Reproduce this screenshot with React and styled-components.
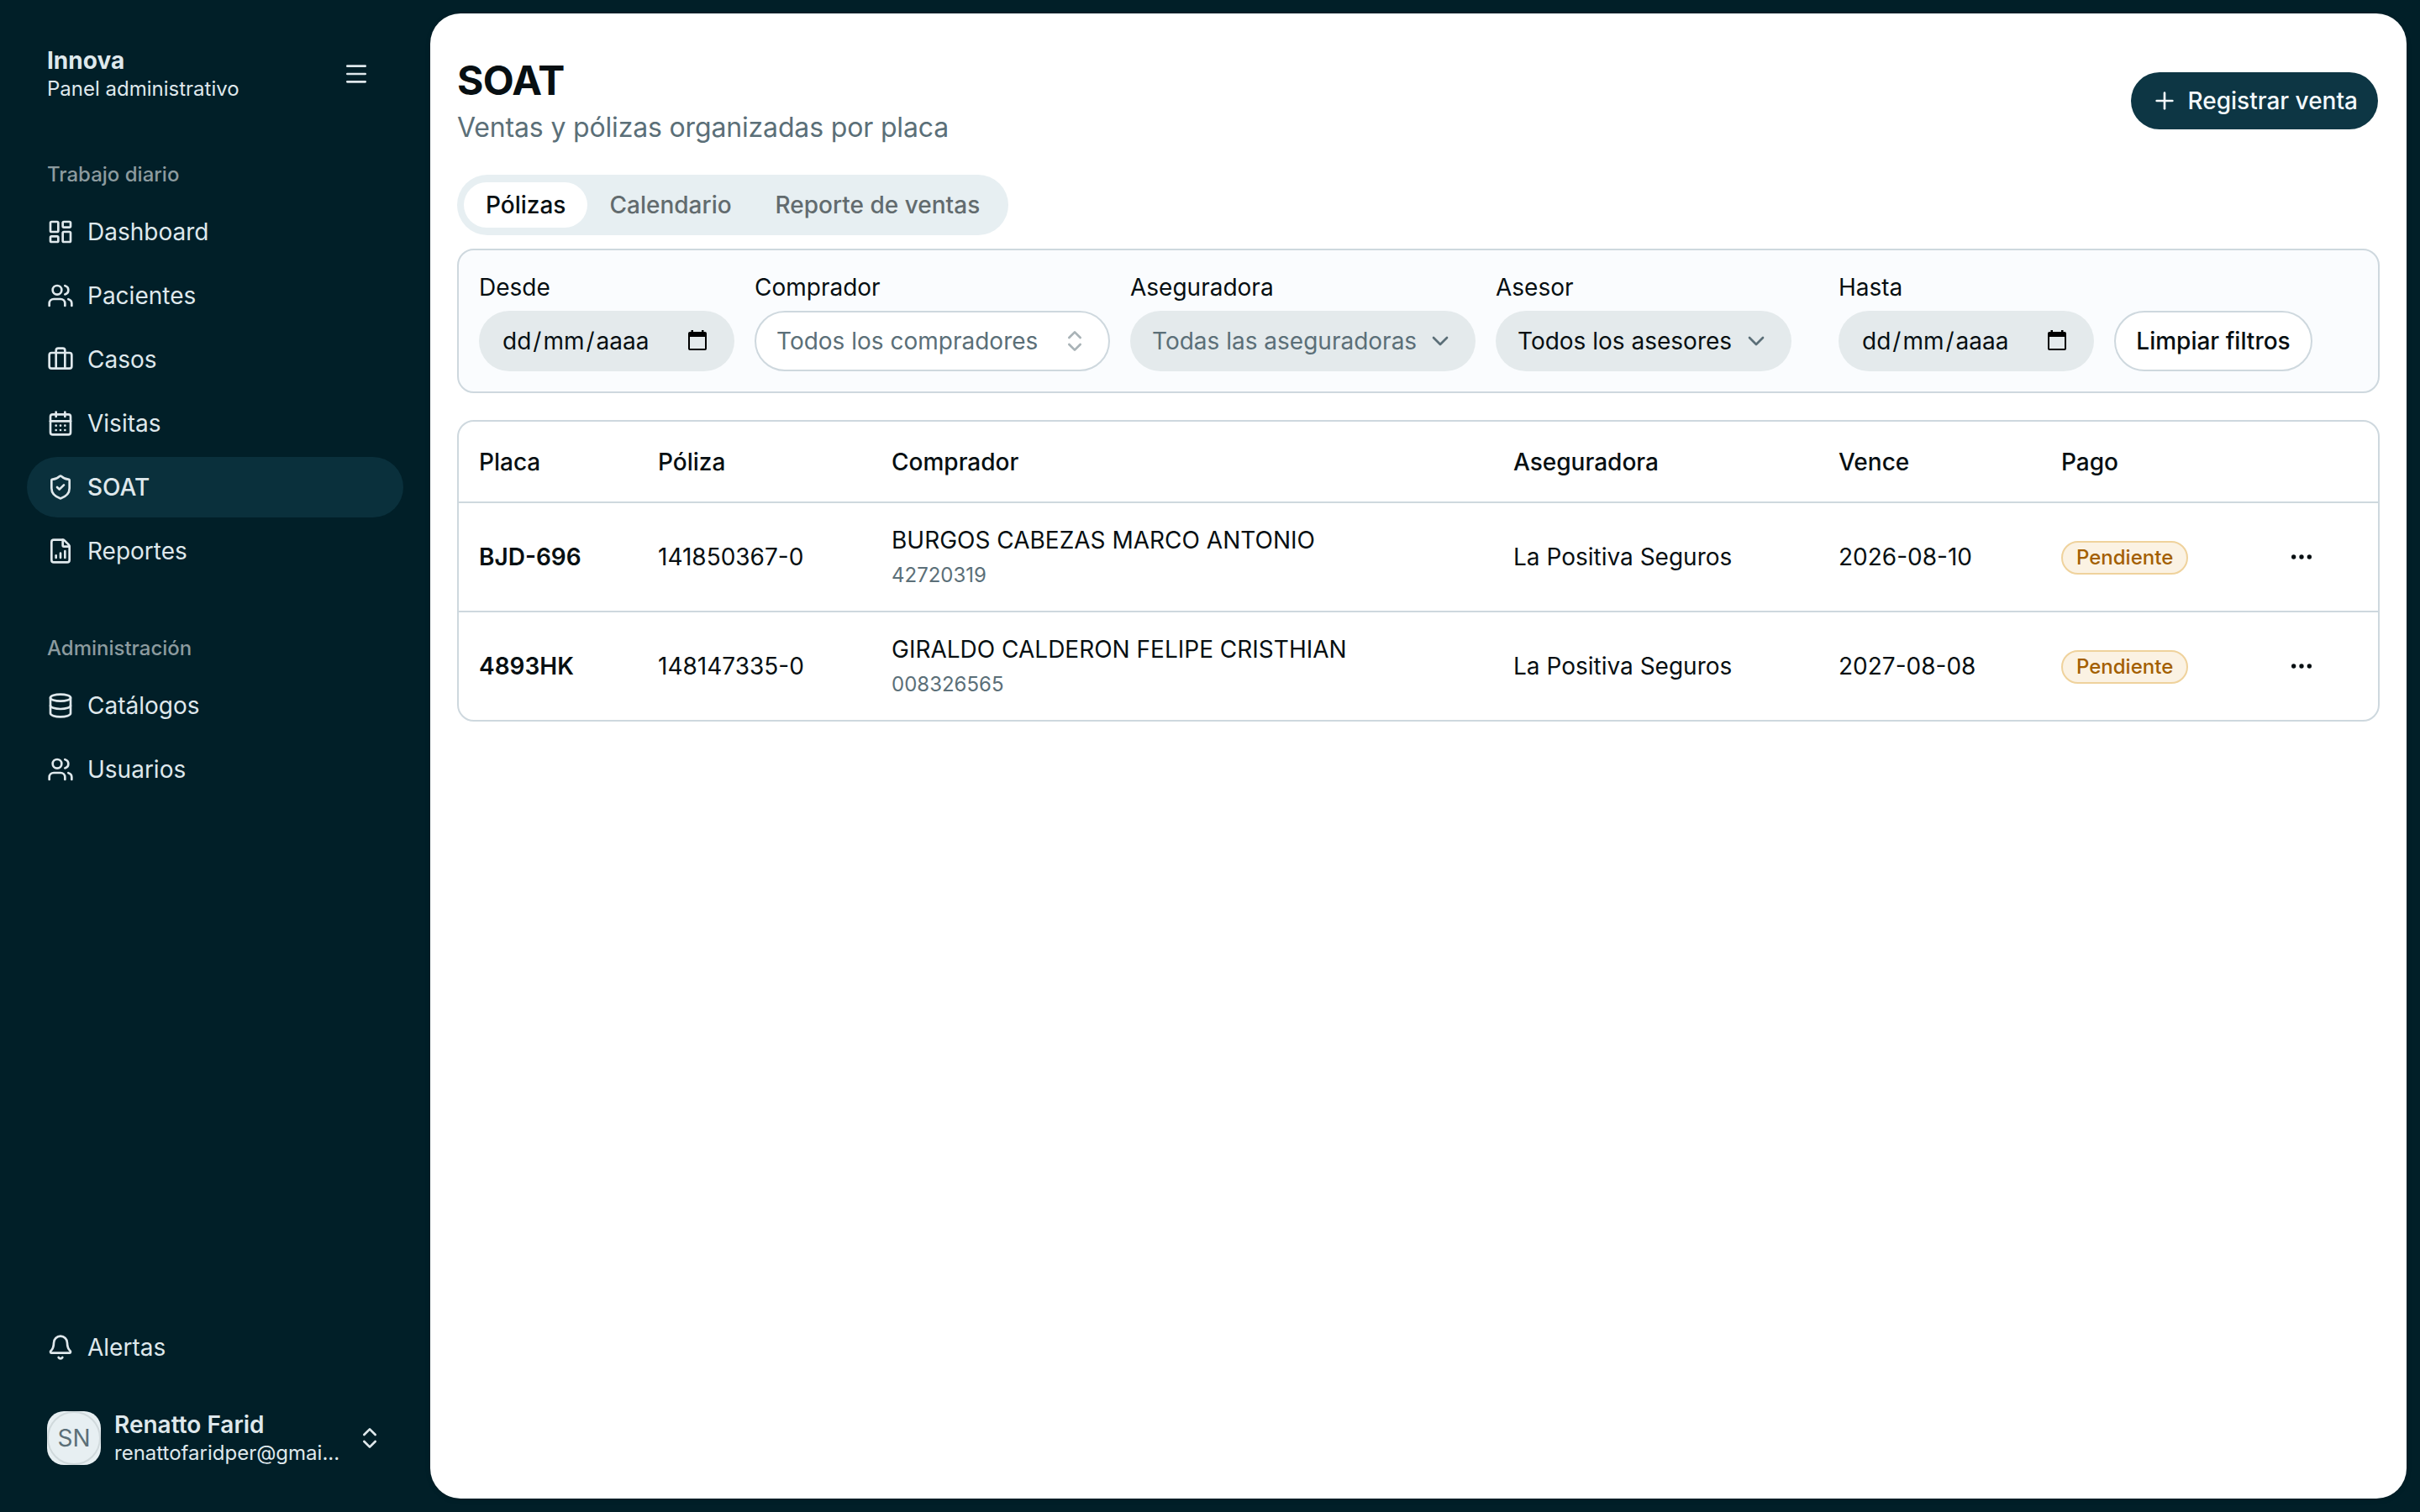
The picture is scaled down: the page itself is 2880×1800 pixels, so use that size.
import React from "react";
import styled, { createGlobalStyle } from "styled-components";
import {
  Menu, LayoutDashboard, Users, Briefcase, CalendarDays, ShieldCheck,
  FileChartColumnIncreasing, Database, Bell, ChevronsUpDown, ChevronDown, Plus, Ellipsis,
} from "lucide-react";

const GlobalStyle = createGlobalStyle`
  *, *::before, *::after { box-sizing: border-box; }
  body {
    margin: 0;
    background: #011f28;
    font-family: Inter, "Liberation Sans", sans-serif;
    font-size: 28px;
    line-height: 40px;
    color: #070f12;
    -webkit-font-smoothing: antialiased;
  }
  button { font: inherit; color: inherit; margin: 0; cursor: pointer; }
  svg { display: block; flex-shrink: 0; }
`;

const Shell = styled.div`
  display: flex;
  width: 100%;
  height: 100vh;
  padding: 16px 16px 16px 0;
  background: #011f28;
`;

const Sidebar = styled.aside`
  display: flex;
  flex-direction: column;
  width: 512px;
  flex-shrink: 0;
  padding: 16px 32px 24px;
  color: #dfe8ec;
`;

const Brand = styled.div`
  display: flex;
  align-items: center;
  justify-content: space-between;
  height: 112px;
  padding: 0 24px;
`;

const BrandText = styled.div`
  display: flex;
  flex-direction: column;
`;

const Strong = styled.span`
  font-size: 28px;
  line-height: 35px;
  font-weight: ${(p) => p.$weight || 600};
`;

const Small = styled.span`
  font-size: 24px;
  line-height: 32px;
`;

const IconButton = styled.button`
  display: grid;
  place-items: center;
  width: 64px;
  height: 64px;
  padding: 0;
  border: 0;
  background: none;
`;

const NavGroup = styled.nav`
  padding-top: ${(p) => p.$top}px;
`;

const NavItems = styled.div`
  display: flex;
  flex-direction: column;
  gap: 4px;
`;

const GroupLabel = styled.div`
  display: flex;
  align-items: center;
  height: 64px;
  padding: 0 24px;
  font-size: 24px;
  font-weight: 500;
  color: #8c9b9f;
`;

const NavItem = styled.a`
  display: flex;
  align-items: center;
  gap: 16px;
  height: 72px;
  padding: 0 24px;
  border-radius: 36px;
  background: ${(p) => (p.$active ? "#0a303c" : "transparent")};
  font-weight: ${(p) => (p.$active ? 500 : 400)};
`;

const Footer = styled.div`
  display: flex;
  flex-direction: column;
  gap: 24px;
  margin-top: auto;
`;

const Account = styled.div`
  display: flex;
  align-items: center;
  gap: 16px;
  height: 96px;
  padding: 0 24px;
`;

const Avatar = styled.div`
  width: 64px;
  height: 64px;
  border-radius: 20px;
  overflow: hidden;
  background: #e7eff2;
`;

const AvatarRing = styled.div`
  display: grid;
  place-items: center;
  width: 64px;
  height: 64px;
  border: 2px solid #d0d9dc;
  border-radius: 50%;
  color: #5b6f78;
`;

const AccountText = styled.div`
  display: flex;
  flex-direction: column;
  width: 272px;
`;

const Main = styled.main`
  flex: 1;
  min-width: 0;
  display: flex;
  flex-direction: column;
  padding: 48px 32px 32px;
  border-radius: 36px;
  background: #ffffff;
  box-shadow: 0 2px 6px rgba(0, 0, 0, 0.1);
`;

const PageHeader = styled.header`
  display: flex;
  align-items: center;
  justify-content: space-between;
  height: 112px;
`;

const Title = styled.h1`
  margin: 0;
  font-size: 48px;
  line-height: 64px;
  font-weight: 700;
  letter-spacing: -0.6px;
`;

const Subtitle = styled.p`
  margin: 0;
  font-size: 32px;
  line-height: 48px;
  letter-spacing: -0.16px;
  color: #5b6f78;
`;

const PrimaryButton = styled.button`
  display: flex;
  align-items: center;
  gap: 11px;
  height: 72px;
  padding: 0 24px;
  border: 2px solid transparent;
  border-radius: 36px;
  background: #0d3644;
  background-clip: padding-box;
  color: #f3f9fc;
  font-weight: 500;
`;

const Tabs = styled.div`
  display: flex;
  align-items: center;
  align-self: flex-start;
  height: 72px;
  margin-top: 32px;
  padding: 0 8px;
  border-radius: 36px;
  background: #e7eff2;
`;

const Tab = styled.button`
  height: 54px;
  padding: 0 24px;
  border: 2px solid transparent;
  border-radius: 27px;
  background: ${(p) => (p.$active ? "#ffffff" : "transparent")};
  color: ${(p) => (p.$active ? "#070f12" : "#626b6e")};
  font-weight: 500;
  line-height: 40px;
`;

const Filters = styled.section`
  display: flex;
  align-items: flex-end;
  gap: 24px;
  height: 172px;
  margin-top: 16px;
  padding: 24px;
  border: 2px solid #ced8de;
  border-radius: 20px;
  background: #fafcfe;
`;

const Field = styled.div`
  display: flex;
  flex-direction: column;
  align-items: flex-start;
  gap: 8px;
  width: ${(p) => p.$width}px;
`;

const Control = styled.div`
  display: flex;
  align-items: center;
  justify-content: space-between;
  width: ${(p) => p.$width}px;
  height: 72px;
  padding: 0 ${(p) => p.$end || 24}px 0 24px;
  border: 2px solid ${(p) => (p.$outlined ? "#ced8de" : "transparent")};
  border-radius: 36px;
  background: ${(p) => (p.$outlined ? "#ffffff" : "#e4eaec")};
  color: ${(p) => (p.$muted ? "#5b6f78" : "#070f12")};
  white-space: nowrap;

  svg { color: ${(p) => (p.$outlined ? "#a9b3b7" : "#5b6f78")}; }
`;

const DateText = styled.span`
  display: flex;
`;

const DatePart = styled.span`
  padding: 0 2px;
`;

const ClearButton = styled.button`
  width: 236px;
  height: 72px;
  padding: 0;
  border: 2px solid #ced8de;
  border-radius: 36px;
  background: #ffffff;
  font-weight: 500;
  white-space: nowrap;
`;

const TableCard = styled.section`
  margin-top: 32px;
  border: 2px solid #ced8de;
  border-radius: 20px;
  overflow: hidden;
`;

const Row = styled.div`
  display: grid;
  grid-template-columns: 213px 278px 740px 387px 265px 254px 1fr;
  align-items: center;
  height: ${(p) => p.$height}px;
  padding-left: 24px;
  border-bottom: ${(p) => (p.$last ? 0 : 2)}px solid #ced8de;
  font-weight: ${(p) => (p.$head ? 500 : 400)};
`;

const Plate = styled.span`
  font-weight: 600;
`;

const Buyer = styled.div`
  display: flex;
  flex-direction: column;
`;

const BuyerId = styled.span`
  margin-top: 4px;
  font-size: 24px;
  line-height: 36px;
  color: #5b6f78;
`;

const Badge = styled.span`
  justify-self: start;
  display: flex;
  align-items: center;
  height: 40px;
  margin-top: 2px;
  padding: 0 16px;
  border: 2px solid #efd29c;
  border-radius: 20px;
  background: #fbf2e3;
  color: #a35f00;
  font-size: 24px;
  font-weight: 500;
`;

const CalendarGlyph = () => (
  <svg width="24" height="26" viewBox="0 0 24 26">
    <path
      fill="#000"
      fillRule="evenodd"
      d="M4.500 0h2.500v2h10V0h2.500v2h1.500a2 2 0 0 1 2 2v18a2 2 0 0 1-2 2H3a2 2 0 0 1-2-2V4a2 2 0 0 1 2-2h1.500zM3 8v14h18V8z"
    />
  </svg>
);

const daily = [
  ["Dashboard", LayoutDashboard],
  ["Pacientes", Users],
  ["Casos", Briefcase],
  ["Visitas", CalendarDays],
  ["SOAT", ShieldCheck],
  ["Reportes", FileChartColumnIncreasing],
];

const admin = [
  ["Catálogos", Database],
  ["Usuarios", Users],
];

const policies = [
  { plate: "BJD-696", policy: "141850367-0", buyer: "BURGOS CABEZAS MARCO ANTONIO", id: "42720319", due: "2026-08-10" },
  { plate: "4893HK", policy: "148147335-0", buyer: "GIRALDO CALDERON FELIPE CRISTHIAN", id: "008326565", due: "2027-08-08" },
];

const NavList = ({ label, items, top, active }) => (
  <NavGroup $top={top}>
    <GroupLabel>{label}</GroupLabel>
    <NavItems>
      {items.map(([name, Icon]) => (
        <NavItem key={name} $active={name === active}>
          <Icon size={32} />
          {name}
        </NavItem>
      ))}
    </NavItems>
  </NavGroup>
);

const DateField = ({ label }) => (
  <Field $width={304}>
    <span>{label}</span>
    <Control $width={304} $end={30}>
      <DateText>
        <DatePart>dd</DatePart>/<DatePart>mm</DatePart>/<DatePart>aaaa</DatePart>
      </DateText>
      <CalendarGlyph />
    </Control>
  </Field>
);

export default function App() {
  return (
    <>
      <GlobalStyle />
      <Shell>
        <Sidebar>
          <Brand>
            <BrandText>
              <Strong $weight={700}>Innova</Strong>
              <Small>Panel administrativo</Small>
            </BrandText>
            <IconButton><Menu size={32} /></IconButton>
          </Brand>
          <NavList label="Trabajo diario" items={daily} top={32} active="SOAT" />
          <NavList label="Administración" items={admin} top={48} />
          <Footer>
            <NavItem><Bell size={32} />Alertas</NavItem>
            <Account>
              <Avatar><AvatarRing>SN</AvatarRing></Avatar>
              <AccountText>
                <Strong>Renatto Farid</Strong>
                <Small>renattofaridper@gmai...</Small>
              </AccountText>
              <ChevronsUpDown size={32} />
            </Account>
          </Footer>
        </Sidebar>
        <Main>
          <PageHeader>
            <div>
              <Title>SOAT</Title>
              <Subtitle>Ventas y pólizas organizadas por placa</Subtitle>
            </div>
            <PrimaryButton><Plus size={32} />Registrar venta</PrimaryButton>
          </PageHeader>
          <Tabs>
            <Tab $active>Pólizas</Tab>
            <Tab>Calendario</Tab>
            <Tab>Reporte de ventas</Tab>
          </Tabs>
          <Filters>
            <DateField label="Desde" />
            <Field $width={423}>
              <span>Comprador</span>
              <Control $width={423} $outlined $muted>
                Todos los compradores
                <ChevronsUpDown size={32} />
              </Control>
            </Field>
            <Field $width={411}>
              <span>Aseguradora</span>
              <Control $width={411} $muted>
                Todas las aseguradoras
                <ChevronDown size={32} />
              </Control>
            </Field>
            <Field $width={384}>
              <span>Asesor</span>
              <Control $width={352}>
                Todos los asesores
                <ChevronDown size={32} />
              </Control>
            </Field>
            <DateField label="Hasta" />
            <ClearButton>Limpiar filtros</ClearButton>
          </Filters>
          <TableCard>
            <Row $head $height={97}>
              <span>Placa</span>
              <span>Póliza</span>
              <span>Comprador</span>
              <span>Aseguradora</span>
              <span>Vence</span>
              <span>Pago</span>
            </Row>
            {policies.map((p, i) => (
              <Row key={p.plate} $height={i === 0 ? 130 : 128} $last={i === 1}>
                <Plate>{p.plate}</Plate>
                <span>{p.policy}</span>
                <Buyer>
                  <span>{p.buyer}</span>
                  <BuyerId>{p.id}</BuyerId>
                </Buyer>
                <span>La Positiva Seguros</span>
                <span>{p.due}</span>
                <Badge>Pendiente</Badge>
                <IconButton><Ellipsis size={32} /></IconButton>
              </Row>
            ))}
          </TableCard>
        </Main>
      </Shell>
    </>
  );
}
